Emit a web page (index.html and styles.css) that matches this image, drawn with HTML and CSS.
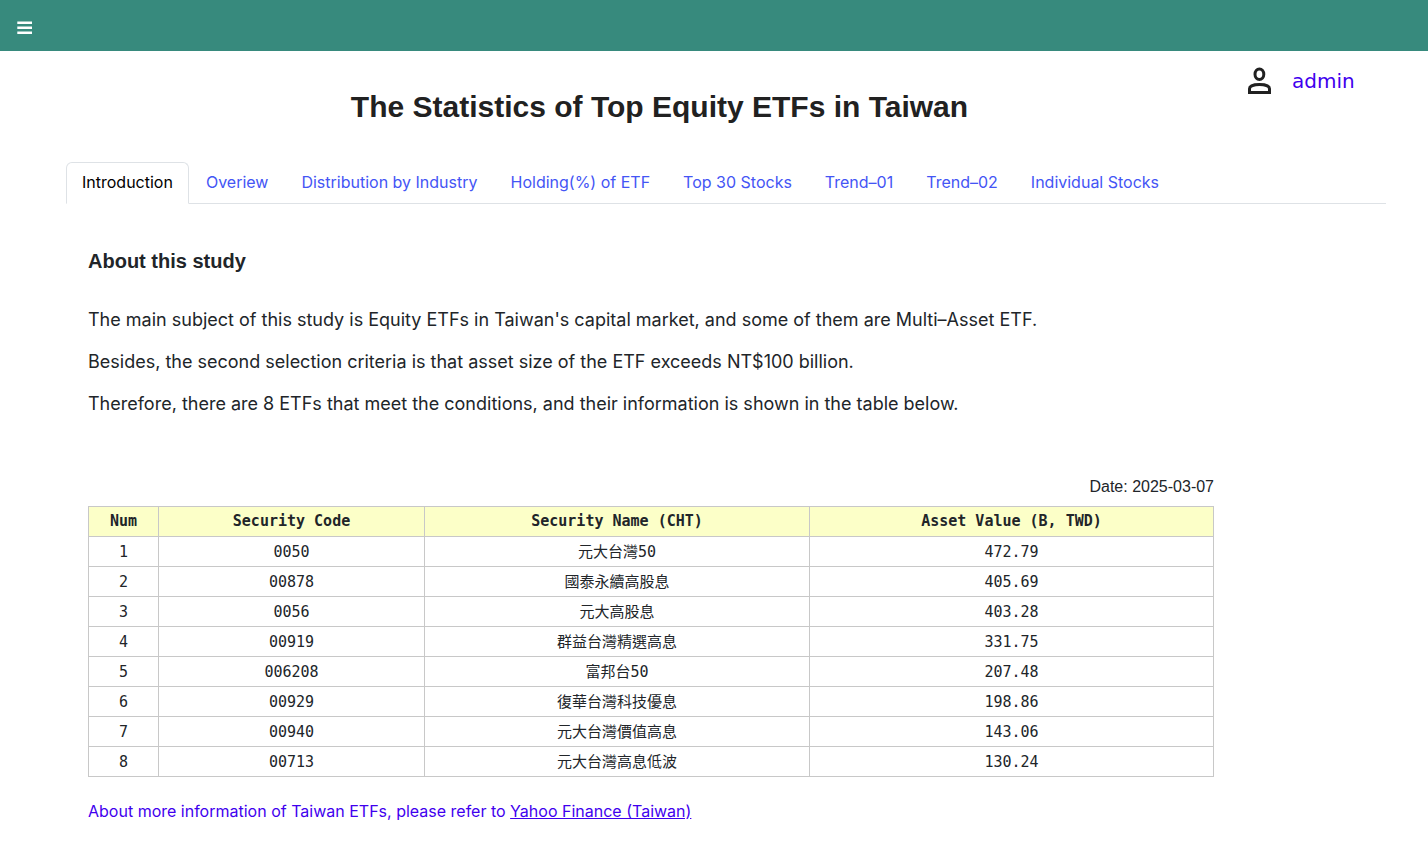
FILE: index.html
```html
<!DOCTYPE html>
<html lang="en">
<head>
<meta charset="utf-8">
<meta name="viewport" content="width=device-width, initial-scale=1">
<title>The Statistics of Top Equity ETFs in Taiwan</title>
<link rel="stylesheet" href="styles.css">
</head>
<body>
<header class="topbar">
  <button class="menu" type="button" aria-label="Menu">
    <svg width="16" height="14" viewBox="0 0 16 14" fill="#fff"><path d="M.3.6h14.700v2.400H.3zM.3 5.600h14.700V8H.3zM.3 10.600h14.700V13H.3z"/></svg>
  </button>
</header>
<div class="masthead">
  <h1 class="title">The Statistics of Top Equity ETFs in Taiwan</h1>
  <div class="user">
    <svg class="user-icon" width="24" height="28" viewBox="0 0 24 28" fill="none" stroke="#212121" stroke-width="3"><ellipse cx="11.4" cy="7.300" rx="4.400" ry="5.300"/><path d="M1.500 25.500v-3.800c0-2.700 4.700-4.200 10-4.200s10 1.500 10 4.200v3.800z"/></svg>
    <span class="user-name">admin</span>
  </div>
</div>
<nav class="tabs">
  <a class="tab active" href="#introduction">Introduction</a>
  <a class="tab" href="#overview">Overiew</a>
  <a class="tab" href="#distribution">Distribution by Industry</a>
  <a class="tab" href="#holding">Holding(%) of ETF</a>
  <a class="tab" href="#top30">Top 30 Stocks</a>
  <a class="tab" href="#trend1">Trend–01</a>
  <a class="tab" href="#trend2">Trend–02</a>
  <a class="tab" href="#stocks">Individual Stocks</a>
</nav>
<main class="content" id="introduction">
  <h2 class="subtitle">About this study</h2>
  <p class="text">The main subject of this study is Equity ETFs in Taiwan's capital market, and some of them are Multi–Asset ETF.</p>
  <p class="text">Besides, the second selection criteria is that asset size of the ETF exceeds NT$100 billion.</p>
  <p class="text">Therefore, there are 8 ETFs that meet the conditions, and their information is shown in the table below.</p>
  <p class="date">Date: 2025-03-07</p>
  <table class="etfs">
    <colgroup><col class="col-num"><col class="col-code"><col class="col-name"><col></colgroup>
    <thead>
      <tr><th>Num</th><th>Security Code</th><th>Security Name (CHT)</th><th>Asset Value (B, TWD)</th></tr>
    </thead>
    <tbody>
      <tr><td>1</td><td>0050</td><td>元大台灣50</td><td>472.79</td></tr>
      <tr><td>2</td><td>00878</td><td>國泰永續高股息</td><td>405.69</td></tr>
      <tr><td>3</td><td>0056</td><td>元大高股息</td><td>403.28</td></tr>
      <tr><td>4</td><td>00919</td><td>群益台灣精選高息</td><td>331.75</td></tr>
      <tr><td>5</td><td>006208</td><td>富邦台50</td><td>207.48</td></tr>
      <tr><td>6</td><td>00929</td><td>復華台灣科技優息</td><td>198.86</td></tr>
      <tr><td>7</td><td>00940</td><td>元大台灣價值高息</td><td>143.06</td></tr>
      <tr><td>8</td><td>00713</td><td>元大台灣高息低波</td><td>130.24</td></tr>
    </tbody>
  </table>
  <p class="more">About more information of Taiwan ETFs, please refer to <a class="more-link" href="#yahoo">Yahoo Finance (Taiwan)</a></p>
</main>
</body>
</html>
```
FILE: styles.css
```css
* { box-sizing: border-box; }
body {
  margin: 0;
  background: #fff;
  color: #212529;
  font-family: Inter, "Liberation Sans", "Noto Sans CJK TC", sans-serif;
  font-size: 16px;
  line-height: 24px;
}
.topbar {
  display: flex;
  align-items: center;
  padding: 16px 17px 11px;
  background: #378a7d;
}
.menu {
  display: flex;
  align-items: center;
  height: 24px;
  padding: 0;
  border: 0;
  background: none;
}
.masthead {
  display: grid;
  grid-template-columns: 1fr 180px;
  padding-left: 71px;
}
.title {
  margin: 36px 0;
  font-family: "Liberation Sans", Arial, sans-serif;
  font-size: 30px;
  line-height: 39px;
  text-align: center;
  color: #212121;
}
.user {
  display: flex;
  gap: 20px;
  align-items: center;
  align-self: start;
  margin-top: 16px;
}
.user-name {
  color: #3f00ee;
  font-family: "DejaVu Sans", Verdana, sans-serif;
  font-size: 20px;
  line-height: 26px;
}
.tabs {
  display: flex;
  gap: 1px;
  margin: 0 42px 0 66px;
  border-bottom: 1px solid #dee2e6;
}
.tab {
  margin-bottom: -1px;
  padding: 7px 15px 9px;
  border: 1px solid transparent;
  border-radius: 6px 6px 0 0;
  color: #4455f5;
  text-decoration: none;
}
.tab.active {
  border-color: #dee2e6 #dee2e6 #fff;
  background: #fff;
  color: #000;
}
.content {
  margin: 45px 214px 0 88px;
}
.subtitle {
  margin: 0 0 34px;
  font-family: "Liberation Sans", Arial, sans-serif;
  font-size: 20px;
  line-height: 24px;
}
.text {
  margin: 0 0 16px;
  font-size: 18px;
  line-height: 26px;
}
.date {
  margin: 58px 0 7px;
  font-family: "Liberation Sans", Arial, sans-serif;
  text-align: right;
}
.etfs {
  width: 100%;
  table-layout: fixed;
  border-collapse: collapse;
  font-family: "DejaVu Sans Mono", "Noto Sans CJK TC", monospace;
  font-size: 15px;
  line-height: 21px;
  text-align: center;
}
.col-num { width: 70px; }
.col-code { width: 266px; }
.col-name { width: 385px; }
.etfs th, .etfs td {
  height: 30px;
  padding: 4px;
  border: 1px solid #c8c8c8;
}
.etfs td { padding: 5px 4px 3px; }
.etfs th { background: #fcffc8; }
.more {
  margin: 22px 0;
  color: #3f00ee;
}
.more-link { color: inherit; }
```
